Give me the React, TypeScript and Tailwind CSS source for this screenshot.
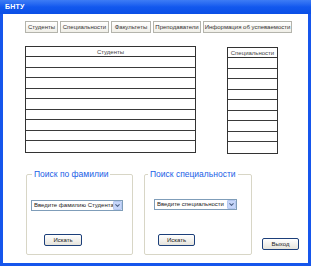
import { ChevronDown } from "lucide-react";

const tabs = [
  { label: "Студенты", w: "w-[33px]" },
  { label: "Специальности", w: "w-[49px]" },
  { label: "Факультеты", w: "w-[40px]" },
  { label: "Преподаватели", w: "w-[48px]" },
  { label: "Информация об успеваемости", w: "w-[89px]" },
];

function Grid({ title, w, rows }: { title: string; w: string; rows: number }) {
  return (
    <div className={`${w} border border-[#333] bg-white`}>
      <div className="h-[10px] border-b border-[#333] text-center text-[6px] leading-[10px] text-[#444]">
        {title}
      </div>
      {Array.from({ length: rows }).map((_, i) => (
        <div key={i} className="h-[10.5px] border-b border-[#3a3a3a] last:border-b-0" />
      ))}
    </div>
  );
}

function Combo({ text, w }: { text: string; w: string }) {
  return (
    <div className={`${w} h-[11px] flex items-center border border-[#7f9db9] bg-white`}>
      <span className="flex-1 pl-[2px] text-[6px] leading-[9px] text-[#222] whitespace-nowrap overflow-hidden">
        {text}
      </span>
      <span className="w-[9px] h-[9px] mr-[0.5px] flex items-center justify-center rounded-[1px] bg-[#c6d6fa] border border-[#b5c8f0]">
        <ChevronDown size={7} strokeWidth={3.5} className="text-[#4d6185]" />
      </span>
    </div>
  );
}

function XpButton({ label, w }: { label: string; w: string }) {
  return (
    <button className={`${w} h-[12px] rounded-[2px] border border-[#1c3f7a] bg-gradient-to-b from-white to-[#e6e4dc] text-[6px] leading-[10px] text-[#222]`}>
      {label}
    </button>
  );
}

export default function App() {
  return (
    <div
      className="w-[311px] h-[266px] flex flex-col bg-white overflow-hidden"
      style={{ fontFamily: '"Liberation Sans", Arial, sans-serif' }}
    >
      <div className="h-[14px] flex items-center pl-[5px] bg-gradient-to-b from-[#3d7cf5] via-[#1258ee] to-[#0a4fe6]">
        <span className="text-[7px] font-bold text-white tracking-[0.2px]">БНТУ</span>
      </div>

      <div className="flex-1 flex flex-col border-x-[3px] border-b-[3px] border-[#1656ec] bg-white">
        <div className="mt-[7px] ml-[22px] flex gap-[2px]">
          {tabs.map((t) => (
            <div
              key={t.label}
              className={`${t.w} h-[12px] border border-[#b4b4ac] bg-gradient-to-b from-white to-[#f0efe8] text-center text-[6px] leading-[10px] text-[#333] whitespace-nowrap`}
            >
              {t.label}
            </div>
          ))}
        </div>

        <div className="mt-[13px] ml-[22px] flex items-start gap-[31px]">
          <Grid title="Студенты" w="w-[171px]" rows={9} />
          <div className="mt-[1px]">
            <Grid title="Специальности" w="w-[51px]" rows={9} />
          </div>
        </div>

        <div className="mt-[15px] ml-[23px] flex items-end">
          <fieldset className="w-[107px] h-[86px] border border-[#d8d6c6] rounded-[2px] px-[4px]">
            <legend className="ml-[1px] px-[2px] text-[8.5px] leading-[11px] text-[#1a5ee6] whitespace-nowrap">
              Поиск по фамилии
            </legend>
            <div className="mt-[20px]">
              <Combo text="Введите фамилию Студента" w="w-[92px]" />
            </div>
            <div className="mt-[14px] ml-[13px]">
              <XpButton label="Искать" w="w-[38px]" />
            </div>
          </fieldset>

          <fieldset className="ml-[11px] w-[108px] h-[86px] border border-[#d8d6c6] rounded-[2px] px-[9px]">
            <legend className="-ml-[6px] px-[2px] text-[8.5px] leading-[11px] text-[#1a5ee6] whitespace-nowrap">
              Поиск специальности
            </legend>
            <div className="mt-[19px]">
              <Combo text="Введите специальности" w="w-[83px]" />
            </div>
            <div className="mt-[15px] ml-[4px]">
              <XpButton label="Искать" w="w-[37px]" />
            </div>
          </fieldset>

          <div className="ml-[10px] mb-[2px]">
            <XpButton label="Выход" w="w-[37px]" />
          </div>
        </div>
      </div>
    </div>
  );
}
